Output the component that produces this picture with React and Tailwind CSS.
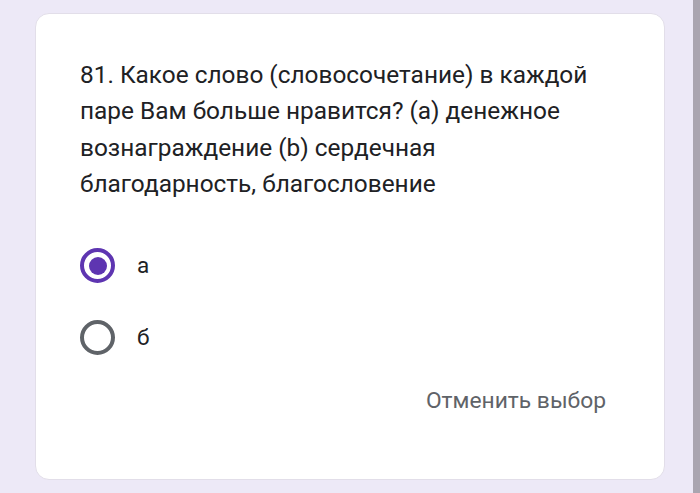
export default function App() {
  return (
    <div className="w-[700px] h-[493px] bg-[#ede9f7] flex overflow-hidden" style={{ fontFamily: 'Roboto, "Open Sans", sans-serif' }}>
      <div className="ml-[35px] mt-[13px] w-[630px] h-[467px] bg-white rounded-[14px] border border-[#e2dee9] flex flex-col pl-[44px] pr-[40px] pt-[43px]">
        <p className="w-[515px] text-[24.4px] leading-[36.3px] text-[#202124]">
          81. Какое слово (словосочетание) в каждой паре Вам больше нравится? (a) денежное вознаграждение (b) сердечная благодарность, благословение
        </p>
        <div className="mt-[46px] flex flex-col gap-[37px]">
          <div className="flex items-center h-[35px]">
            <div className="w-[35px] h-[35px] rounded-full border-[4px] border-[#5e35b1] flex items-center justify-center">
              <div className="w-[18px] h-[18px] rounded-full bg-[#5e35b1]" />
            </div>
            <span className="ml-[22px] text-[22.5px] text-[#202124]">а</span>
          </div>
          <div className="flex items-center h-[35px]">
            <div className="w-[35px] h-[35px] rounded-full border-[4px] border-[#5f6368]" />
            <span className="ml-[22px] text-[22.5px] text-[#202124]">б</span>
          </div>
        </div>
        <div className="flex justify-end mt-[29px] pr-[18px]">
          <span className="text-[22.8px] text-[#5f6368]">Отменить выбор</span>
        </div>
      </div>
      <div className="flex-1" />
      <div className="w-[7px] h-full bg-[#aaa5b0]" />
    </div>
  );
}
